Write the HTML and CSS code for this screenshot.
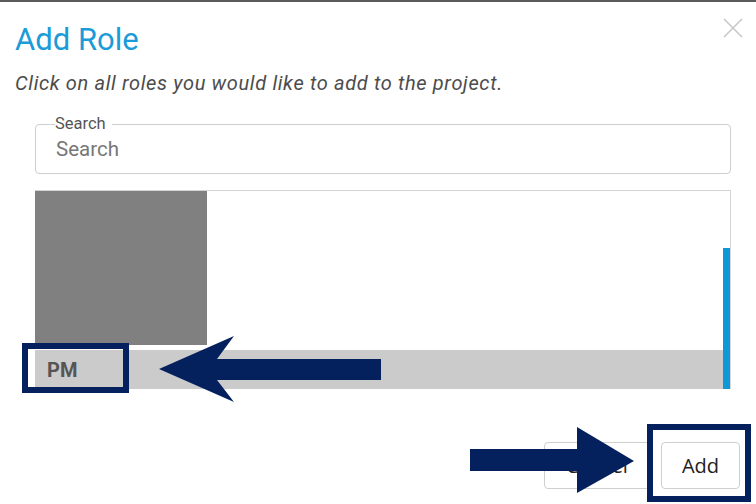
FILE: index.html
```html
<!DOCTYPE html>
<html lang="en">
<head>
<meta charset="utf-8">
<title>Add Role</title>
<link rel="stylesheet" href="styles.css">
</head>
<body>
<div class="topbar"></div>
<div class="dialog">
  <header class="header">
    <h1 class="title">Add Role</h1>
    <button class="close" aria-label="Close">
      <svg width="20" height="20" viewBox="0 0 20 20"><path d="M1 1 L19 19 M19 1 L1 19" stroke="#c8c8c8" stroke-width="1.6" fill="none"/></svg>
    </button>
  </header>
  <p class="subtitle">Click on all roles you would like to add to the project.</p>
  <div class="body">
    <fieldset class="search">
      <legend class="search-label">Search</legend>
      <input class="search-input" type="text" placeholder="Search">
    </fieldset>
    <div class="list">
      <div class="list-content">
        <div class="thumb"></div>
        <div class="row"><span class="row-label">PM</span></div>
      </div>
      <div class="scrollbar"><div class="scroll-thumb"></div></div>
    </div>
  </div>
  <footer class="footer">
    <button class="btn">Cancel</button>
    <button class="btn">Add</button>
  </footer>

  <div class="mark mark-pm"></div>
  <svg class="arrow arrow-left" width="222" height="66" viewBox="0 0 222 66">
    <polygon points="0,33 75,0 58,23 222,23 222,44 58,44 75,66" fill="#04215e"/>
  </svg>
  <div class="mark mark-add"></div>
  <svg class="arrow arrow-right" width="164" height="66" viewBox="0 0 164 66">
    <polygon points="0,22 107,22 107,0 164,34 107,66 107,44 0,44" fill="#04215e"/>
  </svg>
</div>
</body>
</html>
```

FILE: styles.css
```css
* { box-sizing: border-box; }
html, body { margin: 0; padding: 0; background: #fff; }
body {
  font-family: Roboto, "Noto Sans", "Liberation Sans", sans-serif;
  width: 756px;
  height: 504px;
  overflow: hidden;
}
.topbar { height: 2px; background: #5b5b5b; }
.dialog { position: relative; padding: 0 16px 0 15px; }
.header {
  display: flex;
  justify-content: space-between;
  align-items: flex-start;
}
.title {
  margin: 20px 0 0 0;
  font-weight: 400;
  font-size: 31px;
  line-height: 36px;
  color: #1b9bd7;
}
.close {
  margin: 14px -5px 0 0;
  padding: 2px;
  border: 0;
  background: none;
  line-height: 0;
}
.subtitle {
  margin: 13px 0 0 0;
  font-style: italic;
  font-size: 20px;
  letter-spacing: 0.65px;
  line-height: 24px;
  color: #4c4c4c;
}
.body { padding: 0 9px 0 20px; }
.search {
  margin: 20px 0 0 0;
  padding: 0 0 0 20px;
  height: 59px;
  border: 1px solid #cfcfcf;
  border-radius: 4px;
}
.search-label {
  padding: 0 6px 0 0;
  margin-left: -1px;
  font-size: 16.5px;
  line-height: 18px;
  color: #555;
}
.search-input {
  display: block;
  width: 100%;
  margin: 3px 0 0 0;
  padding: 0;
  border: 0;
  outline: none;
  font-family: Roboto, "Noto Sans", sans-serif;
  font-size: 20.5px;
  line-height: 26px;
  color: #333;
  background: transparent;
}
.search-input::placeholder { color: #777; }
.list {
  margin-top: 16px;
  height: 199px;
  display: flex;
  border-top: 1px solid #d4d4d4;
  border-right: 1px solid #d4d4d4;
}
.list-content {
  flex: 1;
  display: flex;
  flex-direction: column;
  gap: 5px;
}
.thumb { width: 172px; height: 154px; background: #808080; }
.row {
  height: 39px;
  background: #cbcbcb;
  display: flex;
  align-items: center;
  padding-left: 12px;
}
.row-label {
  font-weight: 700;
  font-size: 20px;
  color: #555;
}
.scrollbar {
  width: 7px;
  display: flex;
  flex-direction: column;
  justify-content: flex-end;
}
.scroll-thumb { height: 141px; background: #0f98d7; }
.footer {
  margin-top: 53px;
  display: flex;
  justify-content: flex-end;
  gap: 11px;
}
.btn {
  height: 47px;
  padding: 0 10px;
  border: 1px solid #cfcfcf;
  border-radius: 4px;
  background: #fff;
  font-family: "Open Sans", "Noto Sans", sans-serif;
  font-size: 20px;
  color: #222;
}
.btn:first-child { width: 106px; }
.btn:last-child { width: 79px; }
.mark {
  position: absolute;
  border: 6px solid #04215e;
}
.mark-pm { left: 22px; top: 341px; width: 107px; height: 50px; }
.mark-add { left: 647px; top: 422px; width: 104px; height: 78px; }
.arrow { position: absolute; }
.arrow-left { left: 159px; top: 334px; }
.arrow-right { left: 470px; top: 425px; }
```
